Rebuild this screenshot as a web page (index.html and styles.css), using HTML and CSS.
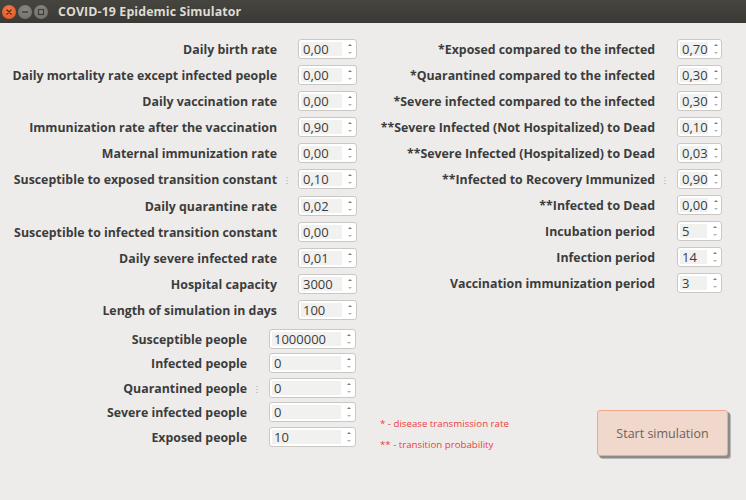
FILE: index.html
```html
<!DOCTYPE html>
<html>
<head>
<meta charset="utf-8">
<link rel="stylesheet" href="styles.css">
</head>
<body>
<div class="window">
  <div class="titlebar">
    <div class="wbtns">
      <span class="wbtn close"><svg width="14" height="14" viewBox="0 0 14 14"><path d="M5 5 L9 9 M9 5 L5 9" stroke="#5a2612" stroke-width="1.4" stroke-linecap="round"/></svg></span>
      <span class="wbtn"><svg width="14" height="14" viewBox="0 0 14 14"><path d="M4 7 H10" stroke="#3c3b37" stroke-width="1.4"/></svg></span>
      <span class="wbtn"><svg width="14" height="14" viewBox="0 0 14 14"><rect x="4.5" y="4.5" width="5" height="5" fill="none" stroke="#3c3b37" stroke-width="1.2"/></svg></span>
    </div>
    <div class="title">COVID-19 Epidemic Simulator</div>
  </div>
  <div class="content">
    <div class="leftcol">
      <div class="grid g1">
        <div class="lbl">Daily birth rate</div><div class="spin w58"><span class="field">0,00</span><span class="arrows"></span></div>
        <div class="lbl">Daily mortality rate except infected people</div><div class="spin w58"><span class="field">0,00</span><span class="arrows"></span></div>
        <div class="lbl">Daily vaccination rate</div><div class="spin w58"><span class="field">0,00</span><span class="arrows"></span></div>
        <div class="lbl">Immunization rate after the vaccination</div><div class="spin w58"><span class="field">0,90</span><span class="arrows"></span></div>
        <div class="lbl">Maternal immunization rate</div><div class="spin w58"><span class="field">0,00</span><span class="arrows"></span></div>
        <div class="lbl grip">Susceptible to exposed transition constant</div><div class="spin w58"><span class="field">0,10</span><span class="arrows"></span></div>
        <div class="lbl">Daily quarantine rate</div><div class="spin w58"><span class="field">0,02</span><span class="arrows"></span></div>
        <div class="lbl">Susceptible to infected transition constant</div><div class="spin w58"><span class="field">0,00</span><span class="arrows"></span></div>
        <div class="lbl">Daily severe infected rate</div><div class="spin w58"><span class="field">0,01</span><span class="arrows"></span></div>
        <div class="lbl">Hospital capacity</div><div class="spin w58"><span class="field">3000</span><span class="arrows"></span></div>
        <div class="lbl">Length of simulation in days</div><div class="spin w58"><span class="field">100</span><span class="arrows"></span></div>
      </div>
      <div class="grid g2">
        <div class="lbl">Susceptible people</div><div class="spin w86"><span class="field">1000000</span><span class="arrows"></span></div>
        <div class="lbl">Infected people</div><div class="spin w86"><span class="field">0</span><span class="arrows"></span></div>
        <div class="lbl grip">Quarantined people</div><div class="spin w86"><span class="field">0</span><span class="arrows"></span></div>
        <div class="lbl">Severe infected people</div><div class="spin w86"><span class="field">0</span><span class="arrows"></span></div>
        <div class="lbl">Exposed people</div><div class="spin w86"><span class="field">10</span><span class="arrows"></span></div>
      </div>
    </div>
    <div class="rightcol">
      <div class="grid g3">
        <div class="lbl">*Exposed compared to the infected</div><div class="spin w44"><span class="field">0,70</span><span class="arrows"></span></div>
        <div class="lbl">*Quarantined compared to the infected</div><div class="spin w44"><span class="field">0,30</span><span class="arrows"></span></div>
        <div class="lbl">*Severe infected compared to the infected</div><div class="spin w44"><span class="field">0,30</span><span class="arrows"></span></div>
        <div class="lbl">**Severe Infected (Not Hospitalized) to Dead</div><div class="spin w44"><span class="field">0,10</span><span class="arrows"></span></div>
        <div class="lbl">**Severe Infected (Hospitalized) to Dead</div><div class="spin w44"><span class="field">0,03</span><span class="arrows"></span></div>
        <div class="lbl grip">**Infected to Recovery Immunized</div><div class="spin w44"><span class="field">0,90</span><span class="arrows"></span></div>
        <div class="lbl">**Infected to Dead</div><div class="spin w44"><span class="field">0,00</span><span class="arrows"></span></div>
        <div class="lbl">Incubation period</div><div class="spin w44"><span class="field">5</span><span class="arrows"></span></div>
        <div class="lbl">Infection period</div><div class="spin w44"><span class="field">14</span><span class="arrows"></span></div>
        <div class="lbl">Vaccination immunization period</div><div class="spin w44"><span class="field">3</span><span class="arrows"></span></div>
      </div>
      <div class="bottom">
        <div class="notes">
          <div>* - disease transmission rate</div>
          <div>** - transition probability</div>
        </div>
        <button class="start">Start simulation</button>
      </div>
    </div>
  </div>
</div>
</body>
</html>
```
FILE: styles.css
```css
html, body {
  margin: 0;
  padding: 0;
  background: #edecea;
  width: 746px;
  height: 500px;
  overflow: hidden;
}
.window {
  font-family: "Open Sans", "DejaVu Sans", sans-serif;
  color: #3c3c3c;
}
.titlebar {
  height: 23px;
  background: linear-gradient(#46453f, #3a3935);
  display: flex;
  align-items: center;
}
.wbtns {
  display: flex;
  gap: 2px;
  padding-left: 2px;
  width: 56px;
}
.wbtn {
  width: 14px;
  height: 14px;
  border-radius: 50%;
  background: radial-gradient(circle at 50% 35%, #8a8883, #6e6c67);
  display: inline-flex;
}
.wbtn.close {
  background: radial-gradient(circle at 50% 35%, #f47a4b, #df5421);
}
.title {
  color: #dfdbd2;
  font-weight: bold;
  font-size: 12.4px;
  letter-spacing: 0.1px;
}
.content {
  display: flex;
}
.leftcol {
  width: 380px;
}
.grid {
  display: grid;
  align-items: center;
}
.g1 {
  grid-template-columns: 277px 58px;
  column-gap: 21px;
  row-gap: 6.1px;
  margin-top: 16px;
}
.g2 {
  grid-template-columns: 247px 86px;
  column-gap: 22px;
  row-gap: 4.5px;
  margin-top: 9px;
}
.g3 {
  grid-template-columns: 275px 44px;
  column-gap: 22px;
  row-gap: 6px;
  margin-top: 16px;
}
.lbl {
  text-align: right;
  font-weight: bold;
  font-size: 12.35px;
  white-space: nowrap;
  position: relative;
  line-height: 18px;
  padding-top: 2px;
}
.spin {
  height: 18px;
  border: 1px solid #cac8c4;
  border-radius: 3px;
  background: #ffffff;
  display: flex;
  align-items: center;
  box-sizing: content-box;
}
.w58 { width: 57px; }
.w86 { width: 85px; }
.w44 { width: 43px; }
.field {
  flex: 1;
  margin: 2px;
  height: 14px;
  background: #f1f1f0;
  font-size: 13px;
  line-height: 14px;
  padding-left: 2px;
  color: #3c3c3c;
}
.arrows {
  width: 12px;
  height: 18px;
  position: relative;
}
.arrows::before, .arrows::after {
  content: "";
  position: absolute;
  left: 4px;
  border-left: 2px solid transparent;
  border-right: 2px solid transparent;
}
.arrows::before {
  top: 4px;
  border-bottom: 2px solid #7d7d7d;
}
.arrows::after {
  bottom: 4px;
  border-top: 2px solid #b5b5b5;
}
.grip::after {
  content: "";
  position: absolute;
  right: -11px;
  top: 7px;
  width: 2px;
  height: 8px;
  background: radial-gradient(circle, #c9c7c3 45%, transparent 50%) 0 0 / 2px 3px repeat-y;
}
.rightcol {
  width: 366px;
}
.bottom {
  display: flex;
  align-items: flex-start;
  margin-top: 117px;
}
.notes {
  color: #ee3b3f;
  font-size: 9.7px;
  line-height: 21px;
  margin-top: 2.5px;
  width: 217px;
}
.start {
  width: 131px;
  height: 46px;
  background: #f0d8cd;
  border: 1px solid #f2a788;
  border-radius: 3px;
  box-shadow: 2px 2px 0 #8d8b87, 3px 3px 0 #b9b7b3;
  font-family: "Open Sans", "DejaVu Sans", sans-serif;
  font-size: 12.5px;
  color: #6e615c;
  padding: 0;
}
```
